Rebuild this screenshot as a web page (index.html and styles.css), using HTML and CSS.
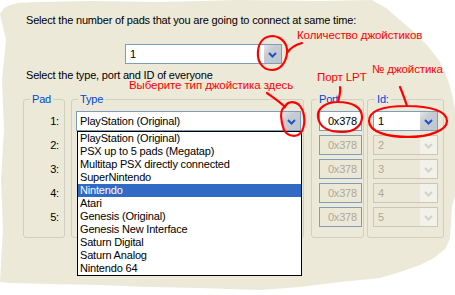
FILE: index.html
```html
<!DOCTYPE html>
<html lang="en">
<head>
    <meta charset="UTF-8">
    <meta name="viewport" content="width=device-width, initial-scale=1.0">
    <title>Pad Configuration</title>
    <link rel="stylesheet" href="styles.css">
</head>
<body>
    <div class="paper"></div>

    <div class="dialog">
        <p class="caption">Select the number of pads that you are going to connect at same time:</p>

        <div class="combo combo-count">
            <span class="combo-value">1</span>
            <span class="combo-btn"><svg width="9" height="6" viewBox="0 0 9 6"><path d="M1 1 L4.5 4.5 L8 1" /></svg></span>
        </div>

        <p class="caption caption-second">Select the type, port and ID of everyone</p>

        <div class="groups">
            <fieldset class="group group-pad">
                <legend>Pad</legend>
                <div class="rows">
                    <div class="pad-num">1:</div>
                    <div class="pad-num">2:</div>
                    <div class="pad-num">3:</div>
                    <div class="pad-num">4:</div>
                    <div class="pad-num">5:</div>
                </div>
            </fieldset>

            <fieldset class="group group-type">
                <legend>Type</legend>
                <div class="rows">
                    <div class="type-wrap">
                        <div class="combo combo-type">
                            <span class="combo-value">PlayStation (Original)</span>
                            <span class="combo-btn"><svg width="9" height="6" viewBox="0 0 9 6"><path d="M1 1 L4.5 4.5 L8 1" /></svg></span>
                        </div>
                        <ul class="dropdown">
                            <li>PlayStation (Original)</li>
                            <li>PSX up to 5 pads (Megatap)</li>
                            <li>Multitap PSX directly connected</li>
                            <li>SuperNintendo</li>
                            <li class="selected">Nintendo</li>
                            <li>Atari</li>
                            <li>Genesis (Original)</li>
                            <li>Genesis New Interface</li>
                            <li>Saturn Digital</li>
                            <li>Saturn Analog</li>
                            <li>Nintendo 64</li>
                        </ul>
                    </div>
                </div>
            </fieldset>

            <fieldset class="group group-port">
                <legend>Port</legend>
                <div class="rows">
                    <div class="port">0x378</div>
                    <div class="port disabled">0x378</div>
                    <div class="port disabled">0x378</div>
                    <div class="port disabled">0x378</div>
                    <div class="port disabled">0x378</div>
                </div>
            </fieldset>

            <fieldset class="group group-id">
                <legend>Id:</legend>
                <div class="rows">
                    <div class="combo combo-id">
                        <span class="combo-value">1</span>
                        <span class="combo-btn"><svg width="9" height="6" viewBox="0 0 9 6"><path d="M1 1 L4.5 4.5 L8 1" /></svg></span>
                    </div>
                    <div class="combo combo-id disabled">
                        <span class="combo-value">2</span>
                        <span class="combo-btn"><svg width="9" height="6" viewBox="0 0 9 6"><path d="M1 1 L4.5 4.5 L8 1" /></svg></span>
                    </div>
                    <div class="combo combo-id disabled">
                        <span class="combo-value">3</span>
                        <span class="combo-btn"><svg width="9" height="6" viewBox="0 0 9 6"><path d="M1 1 L4.5 4.5 L8 1" /></svg></span>
                    </div>
                    <div class="combo combo-id disabled">
                        <span class="combo-value">4</span>
                        <span class="combo-btn"><svg width="9" height="6" viewBox="0 0 9 6"><path d="M1 1 L4.5 4.5 L8 1" /></svg></span>
                    </div>
                    <div class="combo combo-id disabled">
                        <span class="combo-value">5</span>
                        <span class="combo-btn"><svg width="9" height="6" viewBox="0 0 9 6"><path d="M1 1 L4.5 4.5 L8 1" /></svg></span>
                    </div>
                </div>
            </fieldset>
        </div>
    </div>

    <!-- hand-drawn notes on top of the screenshot -->
    <svg class="notes" width="455" height="295" viewBox="0 0 455 295">
        <g class="ink">
            <path d="M302 43 C295 45 290 48 287 53 C286 63 280 70 272 70 C262 70 257 61 258 51 C259 41 265 36 273 36 C282 37 288 44 287 53" />
            <path d="M267 93 C274 98 280 102 285 107 C279 109 281 122 284 130 C288 137 298 138 302 131 C306 123 305 110 298 104 C292 100 286 103 285 107" />
            <path d="M340 87 C341 92 339 97 338 102 C326 102 317 108 318 117 C319 128 330 132 342 132 C354 132 362 126 362 117 C362 107 352 102 338 102" />
            <path d="M400 87 C403 94 405 100 407 106 C385 106 369 110 369 121 C369 132 388 137 408 137 C430 137 447 130 447 121 C447 111 430 106 407 106" />
        </g>
        <text x="297" y="39">Количество джойстиков</text>
        <text x="129" y="89">Выберите тип джойстика здесь</text>
        <text x="317" y="81">Порт LPT</text>
        <text x="372" y="73">№ джойстика</text>
    </svg>
</body>
</html>
```

FILE: styles.css
```css
body {
    margin: 0;
    width: 455px;
    height: 295px;
    overflow: hidden;
    position: relative;
    background: #ffffff;
    font-family: "Liberation Sans", Arial, sans-serif;
    font-size: 11px;
    line-height: 13px;
    letter-spacing: -0.18px;
    color: #000000;
}

.paper {
    position: absolute;
    inset: 0;
    background: #ece9d8;
    clip-path: polygon(0 14px, 4px 8px, 10px 5px, 18px 3px, 40px 2px, 90px 1px, 160px 2px, 240px 0, 320px 1px, 372px 0,
        386px 8px, 400px 20px, 414px 32px, 428px 46px, 440px 62px, 448px 80px, 453px 98px, 455px 110px,
        455px 196px, 452px 206px, 450px 238px, 446px 248px, 434px 258px, 420px 265px, 400px 272px, 380px 278px,
        340px 282px, 300px 287px, 260px 290px, 200px 288px, 150px 287px, 100px 285px, 50px 284px, 10px 283px, 0 282px,
        3px 230px, 1px 180px, 4px 130px, 2px 80px, 6px 40px);
}

.dialog {
    position: relative;
    padding: 14px 0 0 23px;
}

.caption {
    margin: 0 0 0 3px;
}

.caption-second {
    margin-top: 5px;
    line-height: 12px;
}

/* combo boxes */
.combo {
    box-sizing: border-box;
    height: 20px;
    display: flex;
    align-items: stretch;
    border: 1px solid #7f9db9;
    background: #ffffff;
}

.combo-value {
    flex: 1;
    padding-left: 4px;
    line-height: 18px;
    white-space: nowrap;
    overflow: hidden;
}

.combo-btn {
    width: 17px;
    display: flex;
    align-items: center;
    justify-content: center;
    padding-top: 2px;
    box-sizing: border-box;
    background: linear-gradient(135deg, #e4e7ec 0%, #c6ccd4 35%, #bfc6cf 100%);
}

.combo-btn svg path {
    fill: none;
    stroke: #2151c4;
    stroke-width: 2;
}

.combo-count {
    width: 157px;
    margin: 17px 0 0 102px;
}

.combo-type .combo-value {
    padding-left: 3px;
}

.combo.disabled {
    background: #ebe8d7;
    border-color: #c9c7ba;
    color: #aca899;
}

.combo.disabled .combo-btn {
    background: #f2f1ea;
}

.combo.disabled .combo-btn svg path {
    stroke: #d4d2c6;
}

/* group boxes */
.groups {
    display: flex;
    margin-top: 12px;
}

.group {
    box-sizing: border-box;
    min-width: 0;
    margin: 0;
    padding: 0;
    border: 1px solid #d0d0bf;
    border-radius: 3px;
}

.group legend {
    padding: 0 2px;
    margin-left: 6px;
    color: #0046d5;
    line-height: 13px;
}

.rows {
    display: flex;
    flex-direction: column;
    gap: 4px;
    padding: 5px 0 10px;
}

.group-pad {
    width: 42px;
}

.group-pad .rows {
    padding-right: 5px;
}

.pad-num {
    height: 20px;
    line-height: 20px;
    text-align: right;
}

.group-type {
    width: 233px;
    margin-left: 6px;
}

.group-type .rows {
    padding-left: 4px;
}

.type-wrap {
    position: relative;
    width: 225px;
}

.dropdown {
    position: absolute;
    top: 100%;
    left: 1px;
    z-index: 2;
    box-sizing: border-box;
    width: 225px;
    margin: 0;
    padding: 0;
    list-style: none;
    border: 1px solid #000000;
    background: #ffffff;
}

.dropdown li {
    height: 13px;
    line-height: 13px;
    padding-left: 2px;
    white-space: nowrap;
}

.dropdown li.selected {
    background: #316ac5;
    color: #ffffff;
}

.group-port {
    width: 53px;
    margin-left: 7px;
}

.group-port legend {
    margin-left: 5px;
}

.group-port .rows {
    padding-left: 7px;
}

.port {
    box-sizing: border-box;
    width: 43px;
    height: 20px;
    line-height: 18px;
    padding-right: 4px;
    text-align: right;
    border: 1px solid #7f9db9;
    background: #ffffff;
}

.port.disabled {
    background: #ebe8d7;
    color: #aca899;
}

.group-id {
    width: 77px;
    margin-left: 3px;
}

.group-id legend {
    margin-left: 7px;
}

.group-id .rows {
    padding-left: 5px;
}

.combo-id {
    width: 65px;
}

/* annotations */
.notes {
    position: absolute;
    left: 0;
    top: 0;
    z-index: 5;
    pointer-events: none;
}

.notes .ink path {
    fill: none;
    stroke: #ff0000;
    stroke-width: 2.2;
    stroke-linecap: round;
    stroke-linejoin: round;
}

.notes text {
    font-family: "Liberation Sans", Arial, sans-serif;
    font-size: 11.5px;
    letter-spacing: -0.1px;
    fill: #ff0000;
}
```
